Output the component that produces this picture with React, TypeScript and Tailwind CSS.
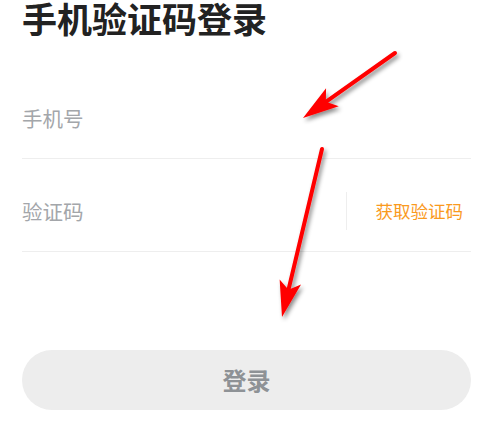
import React from "react";

type Pt = [number, number];

// red annotation arrow: shaft + narrow triangular head
const Arrow: React.FC<{ from: Pt; to: Pt }> = ({ from, to }) => {
  const dx = to[0] - from[0];
  const dy = to[1] - from[1];
  const len = Math.hypot(dx, dy);
  const ux = dx / len;
  const uy = dy / len;
  const headLen = 36;
  const headW = 11;
  const bx = to[0] - ux * headLen;
  const by = to[1] - uy * headLen;
  const nx = -uy;
  const ny = ux;
  const notchX = to[0] - ux * (headLen - 8);
  const notchY = to[1] - uy * (headLen - 8);
  const head = [
    `${to[0]},${to[1]}`,
    `${bx + nx * headW},${by + ny * headW}`,
    `${notchX},${notchY}`,
    `${bx - nx * headW},${by - ny * headW}`,
  ].join(" ");
  return (
    <g>
      <line
        x1={from[0]}
        y1={from[1]}
        x2={notchX}
        y2={notchY}
        stroke="#ff0000"
        strokeWidth={4}
        strokeLinecap="round"
      />
      <polygon points={head} fill="#ff0000" />
    </g>
  );
};

const App: React.FC = () => {
  return (
    <div className="relative h-[424px] w-[493px] overflow-hidden bg-white font-['Noto_Sans_CJK_SC',sans-serif]">
      <div className="px-[22px]">
        <h1 className="text-[35px] font-bold leading-[36px] text-[#222222]">手机验证码登录</h1>

        <div className="mt-[31px] flex h-[92px] items-center border-b border-[#eeeeee] pt-[12px]">
          <input
            className="w-full bg-transparent text-[20.5px] text-[#333] outline-none placeholder:text-[#a3a6aa]"
            placeholder="手机号"
          />
        </div>

        <div className="flex h-[93px] items-center border-b border-[#eeeeee] pt-[12px]">
          <input
            className="min-w-0 flex-1 bg-transparent text-[20.5px] text-[#333] outline-none placeholder:text-[#a3a6aa]"
            placeholder="验证码"
          />
          <div className="h-[38px] w-px bg-[#eeeeee]" />
          <button className="pl-[29px] pr-[8px] text-[17.5px] text-[#fa9a1e]">获取验证码</button>
        </div>

        <button className="mt-[98px] flex h-[60px] w-full items-center justify-center rounded-full bg-[#ededed] text-[24px] font-bold text-[#8e9296]">
          登录
        </button>
      </div>

      <svg className="pointer-events-none absolute inset-0" width="493" height="424">
        <defs>
          <filter id="sh" x="-20%" y="-20%" width="140%" height="140%">
            <feDropShadow dx="2" dy="3" stdDeviation="2" floodColor="#000" floodOpacity="0.45" />
          </filter>
        </defs>
        <g filter="url(#sh)">
          <Arrow from={[395, 53]} to={[303, 118]} />
          <Arrow from={[322, 149]} to={[282, 317]} />
        </g>
      </svg>
    </div>
  );
};

export default App;
